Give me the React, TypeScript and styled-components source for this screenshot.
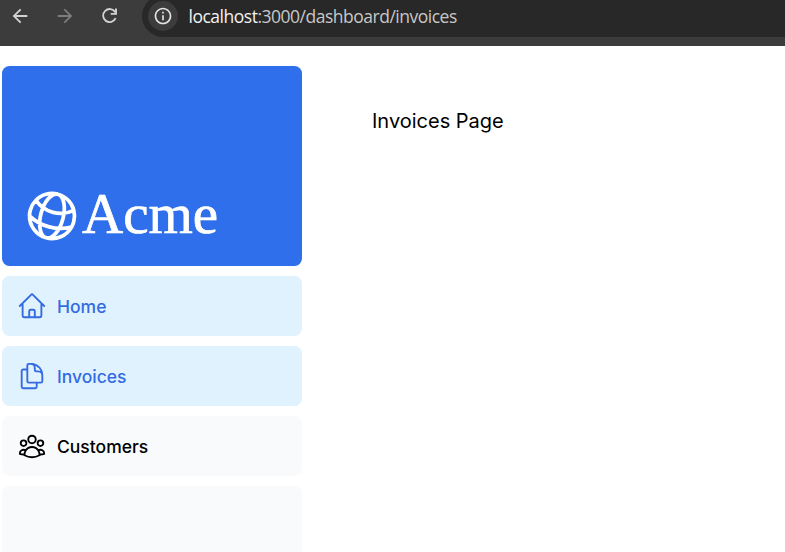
import React from 'react';
import styled, { createGlobalStyle } from 'styled-components';
import {
  HiOutlineGlobeAlt,
  HiOutlineHome,
  HiOutlineDocumentDuplicate,
  HiOutlineUserGroup,
} from 'react-icons/hi2';
import { MdArrowBack, MdArrowForward, MdInfoOutline } from 'react-icons/md';

const GlobalStyle = createGlobalStyle`
  * { box-sizing: border-box; }
  body { margin: 0; background: #fff; overflow: hidden; }
`;

const Screen = styled.div`
  display: flex;
  flex-direction: column;
  height: 552px;
  overflow: hidden;
  font-family: Inter, sans-serif;
  color: #000;
`;

const BrowserBar = styled.header`
  display: flex;
  flex: none;
  height: 46px;
  background: #3c3c3c;
`;

const BrowserControls = styled.div`
  display: flex;
  flex: none;
  width: 142px;
  height: 31px;
  padding-left: 8.5px;
  gap: 23px;
  align-items: center;
`;

const ControlIcon = styled.span<{ $dim?: boolean }>`
  display: flex;
  font-size: 22px;
  color: ${({ $dim }) => ($dim ? '#7c7c7c' : '#d2d2d2')};
`;

const AddressBar = styled.div`
  display: flex;
  flex: 1;
  align-items: center;
  height: 42px;
  margin-top: -5px;
  padding-left: 6px;
  border-radius: 21px 0 0 21px;
  background: #282828;
`;

const SiteInfo = styled.span`
  display: flex;
  align-items: center;
  justify-content: center;
  width: 30px;
  height: 30px;
  border-radius: 50%;
  background: #3c3c3c;
  color: #e3e3e3;
  font-size: 20px;
`;

const Url = styled.span`
  margin-left: 10.5px;
  font: 17.5px/24px 'Open Sans', sans-serif;
  letter-spacing: -0.49px;
  color: #c7c7c7;
  white-space: nowrap;
`;

const Host = styled.span`
  color: #f2f2f2;
`;

const Page = styled.div`
  display: flex;
  flex: 1;
  min-height: 0;
`;

const Sidebar = styled.aside`
  display: flex;
  flex-direction: column;
  flex: none;
  width: 302px;
  padding: 20px 0 0 2px;
  gap: 10px;
`;

const Brand = styled.div`
  display: flex;
  flex: none;
  align-items: flex-end;
  height: 200px;
  padding: 0 20px 20px;
  border-radius: 7.5px;
  background: #2f6feb;
  color: #fff;
`;

const BrandGlobe = styled(HiOutlineGlobeAlt)`
  flex: none;
  width: 60px;
  height: 60px;
  transform: rotate(15deg);
`;

const BrandName = styled.span`
  padding-bottom: 2px;
  font: 57px/60px 'Liberation Serif', serif;
  -webkit-text-stroke: 0.7px #fff;
`;

const NavItem = styled.a<{ $active?: boolean }>`
  display: flex;
  flex: none;
  align-items: center;
  height: 60px;
  padding: 0 15px;
  gap: 10px;
  border-radius: 7.5px;
  font-size: 17.5px;
  line-height: 25px;
  font-weight: 500;
  background: ${({ $active }) => ($active ? '#e0f2fe' : '#f9fafb')};
  color: ${({ $active }) => ($active ? '#346be0' : '#000')};

  svg {
    width: 30px;
    height: 30px;
  }
`;

const SidebarFill = styled.div`
  flex: 1;
  border-radius: 7.5px 7.5px 0 0;
  background: #f9fafb;
`;

const Content = styled.main`
  flex: 1;
  padding: 60px 70px;
`;

const PageTitle = styled.p`
  margin: 0;
  font-size: 20px;
  line-height: 30px;
`;

const links = [
  { name: 'Home', icon: HiOutlineHome, active: true },
  { name: 'Invoices', icon: HiOutlineDocumentDuplicate, active: true },
  { name: 'Customers', icon: HiOutlineUserGroup, active: false },
];

function ReloadIcon() {
  return (
    <svg width="22" height="22" viewBox="0 0 22 22" fill="none" stroke="currentColor" strokeWidth="1.9">
      <path d="M16.6 13.2A6.5 6.5 0 1 1 16.2 7.2" />
      <path d="M17 3.6V8.9H11.7" />
    </svg>
  );
}

export default function App() {
  return (
    <Screen>
      <GlobalStyle />
      <BrowserBar>
        <BrowserControls>
          <ControlIcon><MdArrowBack /></ControlIcon>
          <ControlIcon $dim><MdArrowForward /></ControlIcon>
          <ControlIcon><ReloadIcon /></ControlIcon>
        </BrowserControls>
        <AddressBar>
          <SiteInfo><MdInfoOutline /></SiteInfo>
          <Url><Host>localhost</Host>:3000/dashboard/invoices</Url>
        </AddressBar>
      </BrowserBar>
      <Page>
        <Sidebar>
          <Brand>
            <BrandGlobe />
            <BrandName>Acme</BrandName>
          </Brand>
          {links.map(({ name, icon: Icon, active }) => (
            <NavItem key={name} $active={active}>
              <Icon />
              {name}
            </NavItem>
          ))}
          <SidebarFill />
        </Sidebar>
        <Content>
          <PageTitle>Invoices Page</PageTitle>
        </Content>
      </Page>
    </Screen>
  );
}
